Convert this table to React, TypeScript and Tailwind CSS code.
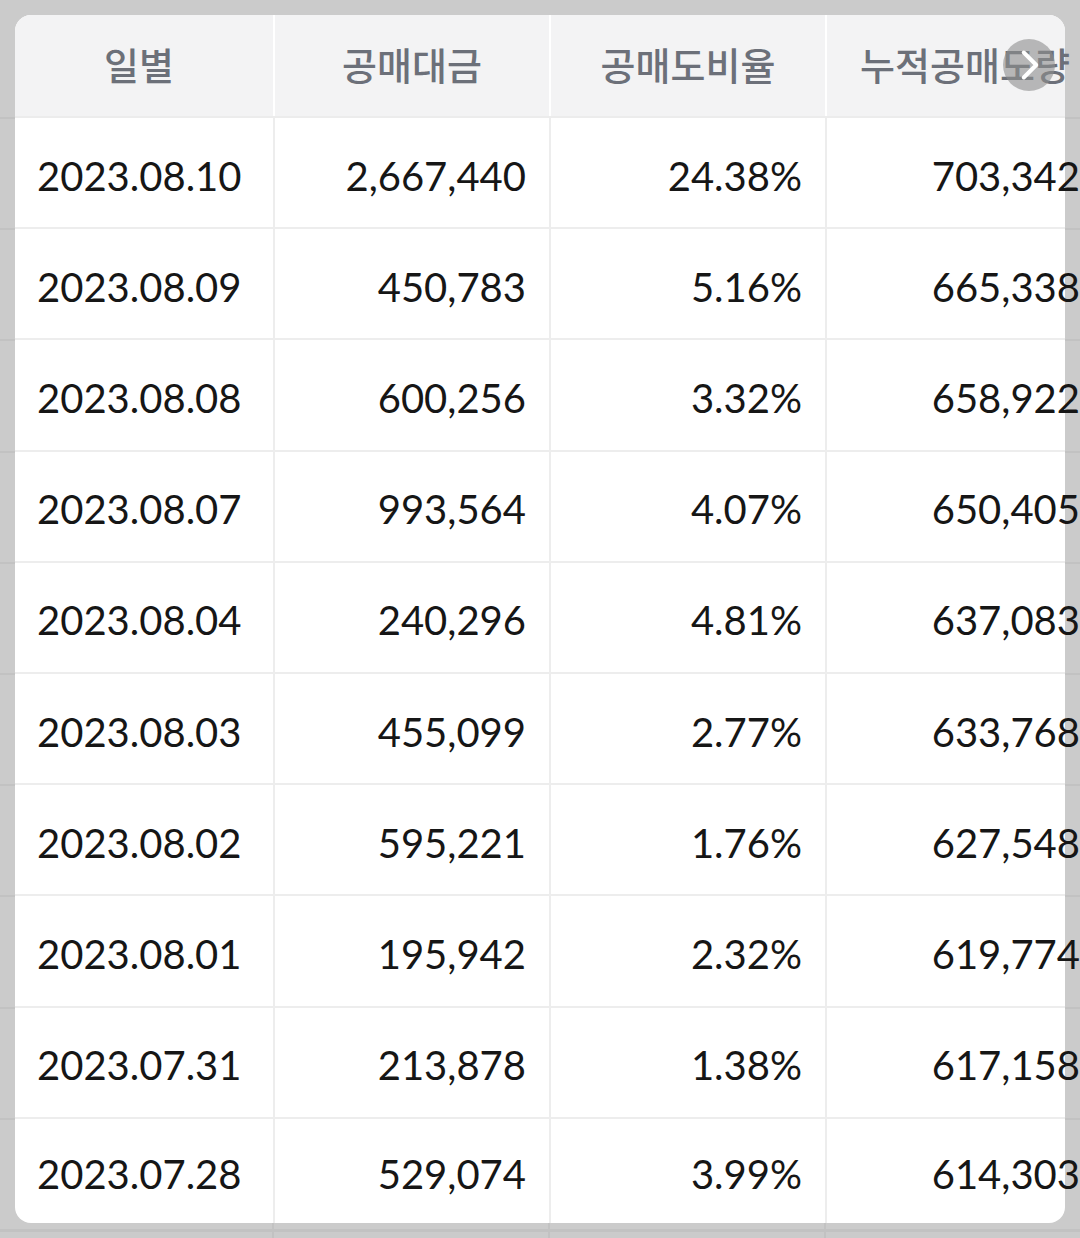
import { ChevronRight } from "lucide-react";

const rows = [
    ["2023.08.10", "2,667,440", "24.38%", "703,342"],
    ["2023.08.09", "450,783", "5.16%", "665,338"],
    ["2023.08.08", "600,256", "3.32%", "658,922"],
    ["2023.08.07", "993,564", "4.07%", "650,405"],
    ["2023.08.04", "240,296", "4.81%", "637,083"],
    ["2023.08.03", "455,099", "2.77%", "633,768"],
    ["2023.08.02", "595,221", "1.76%", "627,548"],
    ["2023.08.01", "195,942", "2.32%", "619,774"],
    ["2023.07.31", "213,878", "1.38%", "617,158"],
    ["2023.07.28", "529,074", "3.99%", "614,303"],
];

const headers = ["일별", "공매대금", "공매도비율", "누적공매도량"];

export default function App() {
    return (
        <div
            className="relative w-[1080px] h-[1238px] overflow-hidden bg-[#cbcbcb] bg-[repeating-linear-gradient(to_bottom,#c2c2c2_0,#c2c2c2_2px,transparent_2px,transparent_111.2px)] bg-[length:100%_1120px] bg-no-repeat bg-[position:0_117px]"
            style={{ fontFamily: "Lato, 'Noto Sans CJK KR', sans-serif" }}
        >
            <div className="pl-[15px] pt-[15px]">
                <div className="w-[1050px] h-[1208px] rounded-[16px] bg-white">
                    {/* header */}
                    <div className="flex w-full h-[103px] rounded-t-[16px] bg-[#f3f3f4] border-b-2 border-[#ececec]">
                        {headers.map((h, i) => (
                            <div
                                key={h}
                                className={`shrink-0 flex items-center justify-center text-[38px] font-medium text-[#6c7079] ${i === 0 ? "w-[260px] pr-[10px]" : "w-[276px]"} ${i < 3 ? "border-r-2 border-white" : ""}`}
                            >
                                {h}
                            </div>
                        ))}
                    </div>
                    {/* body */}
                    {rows.map((r, ri) => (
                        <div
                            key={r[0]}
                            className={`flex w-full ${ri === rows.length - 1 ? "h-[104px]" : "h-[111.2px] border-b-2 border-[#ededed]"}`}
                        >
                            {r.map((c, ci) => (
                                <div
                                    key={ci}
                                    className={`shrink-0 flex items-center pt-[6px] text-[40px] text-[#161616] ${ci === 0 ? "w-[260px] pl-[22px] justify-start" : "w-[276px] pr-[23px] justify-end"} ${ci < 3 ? "border-r-2 border-[#ededed]" : ""}`}
                                >
                                    {c}
                                </div>
                            ))}
                        </div>
                    ))}
                </div>
            </div>
            {/* strip below the card */}
            <div className="flex h-[15px]">
                <div className="w-[274px] shrink-0 border-r-2 border-[#c2c2c2]" />
                <div className="w-[276px] shrink-0 border-r-2 border-[#c2c2c2]" />
                <div className="w-[276px] shrink-0 border-r-2 border-[#c2c2c2]" />
            </div>
            <div className="absolute left-0 top-[1230px] w-full h-[2px] bg-[#c2c2c2]" />

            {/* scroll button */}
            <div className="absolute left-[1003px] top-[39px] w-[52px] h-[52px] rounded-full bg-[#8e8e8e]/60 flex items-center justify-center">
                <ChevronRight size={56} strokeWidth={1.9} className="text-white ml-[2px]" />
            </div>
        </div>
    );
}
